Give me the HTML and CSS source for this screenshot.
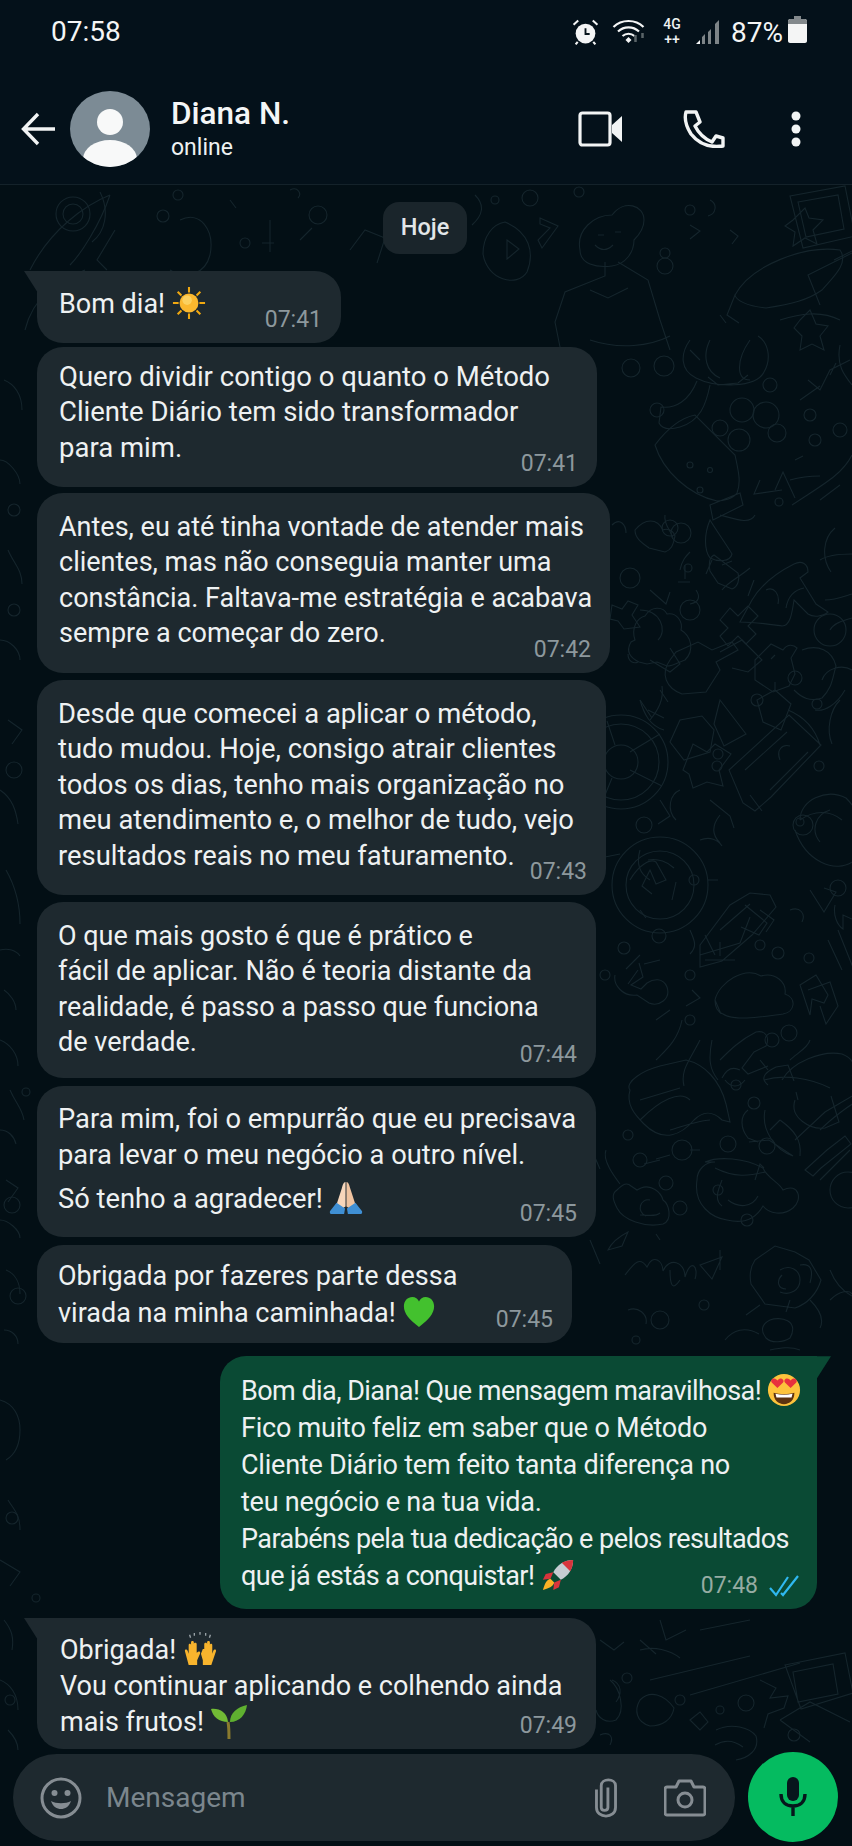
FILE: index.html
```html
<!DOCTYPE html>
<html lang="pt">
<head>
<meta charset="utf-8">
<title>Diana N.</title>
<link rel="stylesheet" href="styles.css">
</head>
<body>
<div class="phone">
  <svg class="doodles" viewBox="0 0 852 1846" aria-hidden="true">
    <!-- top band -->
    <path d="M30 270c20-40 55-65 80-75M110 195c-10 30-30 60-40 70M25 330c10-40 40-50 60-60"/>
    <circle cx="73" cy="214" r="10"/><circle cx="73" cy="214" r="17"/>
    <path d="M100 192c10 20 5 40-8 50M115 230l-18 30 10 10M180 220c20-10 35 10 30 35-5 20-25 25-40 15"/>
    <circle cx="163" cy="216" r="6"/><circle cx="178" cy="195" r="5"/><circle cx="318" cy="215" r="9"/><circle cx="245" cy="243" r="5"/>
    <path d="M262 243h12M300 240l12-12M350 250l15-20 20 8-8 25M290 190c8-4 12 4 8 8M230 200l6 8M270 220v32"/>
    <circle cx="530" cy="198" r="8"/><circle cx="495" cy="200" r="4"/><circle cx="579" cy="192" r="5"/>
    <path d="M475 195c10 10 8 20-3 30M505 222c24 10 30 30 22 50-10 16-40 8-44-18 0-18 10-30 22-32ZM507 240l12 9-12 10ZM540 218l18 8-16 22 -4-8 12-12-10-4Z"/>
    <path d="M580 250c-4-20 14-35 32-35 12-16 32-10 32 5 0 8-6 16-10 20 0 12-8 24-22 26-16 2-32-2-32-16ZM595 245c6 6 12 6 18 0M598 235h6M615 232h6M605 262v14l-40 16-10 30 6 30M618 262l30 18 12 40 10 30M590 290l18 8 20-10M590 340c30 10 60 6 80-4"/>
    <circle cx="690" cy="210" r="5"/><circle cx="665" cy="253" r="5"/><circle cx="665" cy="266" r="8"/>
    <path d="M690 225l10 6-10 8M710 200c8 4 6 14-2 16M730 230l8 6-6 8M735 295c16-30 70-50 105-45 10 14-10 30-18 40-14 10-30 14-56 18-20-2-30-8-31-13ZM735 295l-8 20 12 8M780 320c20-6 40-10 60 0"/>
    <path d="M793 220l12-12 4 10 14 2-10 10 4 14-12-6-12 8 2-14-10-6Z"/>
    <path d="M790 196l55-10 10 50-52 12Z M798 202l40-7 6 34-38 8ZM834 260l40-20M820 305l-12-30 50-25"/>
    <path d="M800 320l10-10 6 14 12 2-8 10 4 14-12-6-12 6 2-14-8-8ZM720 315l6 8M690 350l10 10"/>
    <!-- right column upper -->
    <path d="M690 340c-10 14-10 30 6 38 20 10 60 10 68 -6 8-14 4-30-6-36M750 340c-14 20-14 40 0 40M710 340c-8 16-4 32 10 38M708 377l10 8 20-2 10-8M710 385c-4 20-10 36-30 42-10 3-18 2-21-4l2-16c14 2 28-6 36-26"/>
    <circle cx="631" cy="368" r="9"/><circle cx="664" cy="366" r="10"/><circle cx="657" cy="410" r="7"/><circle cx="770" cy="385" r="7"/>
    <circle cx="742" cy="410" r="12"/><circle cx="766" cy="415" r="13"/><circle cx="720" cy="428" r="8"/><circle cx="777" cy="433" r="9"/><circle cx="739" cy="440" r="11"/>
    <path d="M655 445c15-20 30-28 40-30l40 40c4 18 6 28 2 38-4 6-14 8-20 8-28-6-54-30-62-56ZM710 505l30-12 3 12-30 15ZM720 515c15 4 30 10 35 0"/>
    <circle cx="690" cy="465" r="3"/><circle cx="710" cy="470" r="2.5"/><circle cx="700" cy="490" r="3"/>
    <path d="M760 480l-6 14 28-4M775 490l8-18 12 26M790 480c14-4 22-4 30-4M792 505c30-20 50-30 60-50M820 500l20-15M795 460l8-4"/>
    <path d="M808 380l12 10 10-20 20-10M800 400l20-14M830 375l6-12M840 345c-4 20 4 30 12 40"/>
    <circle cx="810" cy="415" r="6"/><circle cx="840" cy="430" r="7"/><circle cx="815" cy="440" r="6"/>
    <!-- right column mid -->
    <circle cx="670" cy="528" r="8"/><circle cx="681" cy="533" r="10"/>
    <circle cx="779" cy="502" r="4"/>
    <path d="M635 530c10-12 22-12 28 0 4-2 10 0 12 6-2 10-4 14-10 16l-16-4c-8-6-14-10-14-18Z M612 525c8-8 14 0 14 8M600 560c-10 0-14-10-10-14"/>
    <path d="M710 520c-6 14-6 30 0 38 8 4 20 4 22-4-6-10-16-24-22-34ZM665 515c-2 10 8 18 8 24M722 565l10-4M712 560l-6 14"/>
    <circle cx="688" cy="568" r="4"/>
    <path d="M750 568c-12 10-22 14-28 22M754 580l-6 16M678 582h12M685 565v14M696 590c4 6 4 12-6 14"/>
    <path d="M714 555l24 18c2 6 0 14-6 16l-14-6-8-12c-2-8 0-14 4-16Z"/>
    <path d="M752 600c12-20 30-30 42-36 8-4 14 0 14 8l-8 6 16 26 12 8c-4 4-14 6-20 2l-14-14c-2 14-4 26-12 26-14-2-26-4-42-4ZM766 590c8-4 14 4 12 14M786 608c2-12 8-18 18-20"/>
    <path d="M592 510c14 4 14 18 6 26M640 610c20 0 28 20 18 30M628 654c0 8 6 10 10 8"/>
    <circle cx="630" cy="578" r="10"/>
    <path d="M835 528c-12 10-14 30-4 44M820 560c6-4 14-6 32-6M825 600c10 0 20-4 27-6M830 630c4-8 16-10 22-12"/>
    <circle cx="690" cy="610" r="10"/><circle cx="830" cy="630" r="16"/>
    <path d="M612 605l10 4 6-8 10 4-6 10 8 12-16 2-6-8-8-2ZM650 590l16 14 4-12M680 570c2-10 6-14 10-18"/>
    <path d="M720 620l10-12 8 8 10-10 10 10-10 10 8 8-10 10-8-8-10 10-8-10 8-8Z"/>
    <path d="M635 640c-4-12 2-22 10-24 6-10 18-10 22-2 10-2 16 8 14 16 10 6 14 20 4 30-6 2-12 6-18 6l-10-4-10 2-8-2c-8-4-14-10-8-20l4-2ZM650 660l20 12 10-8-10-16"/>
    <path d="M670 660c-10 14-4 28 12 34l24-2 14-22-4-8 22-12-6-8-20 8-14-8-22 10ZM720 652l22-12 20 20-14 12-16-4"/>
    <path d="M755 660l16-16 12 6c4-6 10-6 14-2l-6 10 4 16-6 12-16 6-18-12Z M775 655l-4 4"/>
    <circle cx="795" cy="678" r="7"/>
    <path d="M802 650c16-6 30 0 34 16-4 14-4 22-14 32-12 4-20 0-28-8M822 680c4-12 20-16 30-10M845 690c-8 14-20 22-30 20"/>
    <path d="M775 690l16 14-10 26-18-8-6-22ZM775 690v-8"/>
    <circle cx="757" cy="700" r="6"/><circle cx="817" cy="704" r="5"/>
    <path d="M720 700l26 34-22 12-10-22ZM660 690l8 12M640 700c4 14 10 26 24 30"/>
    <path d="M680 720l-10 22 14 18 26-8 4-22-12-14ZM648 710l16 8"/>
    <path d="M840 700c-10 10-14 30-8 44M780 760c-4-10 2-16 10-14"/>
    <circle cx="621" cy="762" r="17"/><circle cx="621" cy="762" r="47"/><circle cx="621" cy="762" r="38"/>
    <path d="M630 770l32 16M630 752l30-18M615 745l-8-24M612 778l-14 34"/>
    <path d="M650 720c8-10 14-20 12-34M640 700l12 18"/>
    <path d="M683 770l10-26 14 8 8-8 16 10-12 16 4 16-16-4-14 6-4-14Z"/>
    <circle cx="718" cy="754" r="5"/><circle cx="717" cy="766" r="5"/>
    <path d="M729 770l60-55 32 30-50 52-16 14-12-8ZM745 770l42-38M770 790l38-38M750 795l12 16M820 745c-6-20-20-30-32-35"/>
    <circle cx="819" cy="766" r="5"/>
    <path d="M800 820c0-20 26-32 46-22 10 10 16 20 10 34M795 830c10 30 40 46 60 30M830 810c-14 4-20 20-10 32M800 820c14-10 30-10 42 0"/>
    <circle cx="803" cy="825" r="10"/><circle cx="800" cy="822" r="4"/>
    <path d="M660 800l10 16-12 8M680 790c-10 4-14 20-4 30M710 800l20 16 4 12M720 815c-8 10-8 20 0 28M700 840c10-4 18 0 22 6"/>
    <circle cx="644" cy="825" r="8"/>
    <path d="M600 858l20-4M640 850c-4 14 0 24 10 30M648 860c10-2 20 2 26 8"/>
    <!-- right column lower -->
    <circle cx="660" cy="885" r="48"/><circle cx="660" cy="885" r="34"/>
    <path d="M630 880c8-14 20-22 26-18l10 18-10 4-6-14-8 16 10 8M672 900l4-18M640 910l6 8"/>
    <circle cx="694" cy="880" r="5"/>
    <path d="M708 880h10M690 930c4 10 8 16 0 24M705 935l10 20M720 942l0 14"/>
    <circle cx="659" cy="936" r="7"/><circle cx="624" cy="948" r="6"/>
    <path d="M700 945l30-40 20-12 20 2 6 12-24 28-30 26-22 6ZM720 930l30-26M700 955l40-12 10-26M745 905l22 18-8 12-18-8M705 960l30 0"/>
    <circle cx="760" cy="945" r="5"/><circle cx="778" cy="953" r="6"/><circle cx="809" cy="958" r="5"/>
    <path d="M760 910l14 10-8 12M790 910c10-4 16 4 12 12M810 890l14 22 12-20-12-4"/>
    <circle cx="838" cy="888" r="8"/>
    <path d="M835 905c-2 10 2 20 8 24v-14l9 4M838 930l16 40M828 940l14 30"/>
    <circle cx="605" cy="975" r="5"/>
    <path d="M640 955l-14 14M638 970l-10 14M660 960l-16 4"/>
    <circle cx="690" cy="975" r="5"/>
    <path d="M615 975c-2 10 8 22 22 20l12 8c10 4 22-4 18-16-4-10-14-8-20-4l-6 6-10-4 12-8-4-14M670 1010l-14 10M692 990l8 8-14 8"/>
    <path d="M715 1000c4-18 30-34 46-24 14-4 26 6 24 18 12 4 10 18-2 20-16 2-48 8-60 0-6-2-8-8-8-14ZM715 1000l6 14"/>
    <path d="M800 985l16-10 12 20-4 8-12-4-2 16ZM808 990l22-8 8 24-12 18-6-18"/>
    <circle cx="690" cy="1020" r="5"/><circle cx="772" cy="1040" r="7"/>
    <path d="M682 1020c-4 20-16 30-26 40M700 1040c-10 20-20 30-16 46M720 1060c10-10 20-20 36-28 10-2 14 6 10 14l-12 6-12 16 6 6 20-8M712 1040c-4 20-2 30 6 40M760 1060l8 10M810 1040c-2 8-14 14-20 20"/>
    <circle cx="789" cy="1033" r="8"/>
    <path d="M768 1085c-10-8 0-14 8-18l12-2 6 16M740 1070c-8-4-14 0-18 8M725 1080c6 8 14 8 20 0"/>
    <path d="M782 1080c10-18 40-30 60-26 10 4 16 12 10 22M764 1080c20-6 46-2 66 8"/>
    <path d="M798 1100l-2-8M795 1100c-6 18 16 30 30 28l14-6-8-26M780 1120c14 10 22 20 20 36"/>
    <path d="M630 1090c-6-8 14-20 30-24l26-6c18 4 34 20 40 44l4 18-8-2c-10-10-20-8-28 0-12 14-30 24-50 4-10-10-18-20-14-34ZM640 1100l40-12M640 1120c20-20 40-30 50-20M670 1130c14-4 30-10 40-10"/>
    <circle cx="736" cy="1085" r="5"/>
    <path d="M748 1110c-8 6-8 18 0 28l10 4M765 1110c-4 20 10 40 28 46l-24-16-20 2"/>
    <circle cx="754" cy="1103" r="6"/>
    <path d="M795 1140l30-28 34-20M820 1130c10-10 30-26 40-30M770 1130l10-10"/>
    <circle cx="628" cy="1135" r="5"/>
    <path d="M592 1135c-2 8 2 22 8 34M606 1150c-4 10 8 26 14 34"/>
    <circle cx="682" cy="1150" r="10"/><circle cx="728" cy="1144" r="8"/><circle cx="767" cy="1146" r="8"/>
    <circle cx="640" cy="1160" r="7"/><circle cx="666" cy="1183" r="7"/>
    <path d="M670 1155l-14 4M660 1160l-16 4M700 1150h-10"/>
    <path d="M705 1162c14-6 40-4 58 6 4 10 16 14 20 22 16-8 20 10 10 18-10 8-24 6-30-2-8 14-20 18-36 14-14-2-34-14-30-40 0-10 8-18 18-18ZM715 1168c20 10 34 8 50 4M728 1200c10 8 24 8 30-4M722 1180c-4 10-8 20 0 26"/>
    <circle cx="718" cy="1190" r="5"/>
    <path d="M755 1180l5-16 4 4M805 1170l22-20 18-14 6 8-30 24-8 8ZM820 1180l30-30"/>
    <circle cx="848" cy="1190" r="18"/>
    <path d="M617 1190c6-6 10-8 14-4l6 4 4-2c10-4 20 4 22 12 6 4 10 20 0 24-18 4-40-4-46-16-4-8-6-14 0-18ZM650 1200c-10-2-14 12-4 16M640 1215c8 0 16 2 20-2"/>
    <circle cx="680" cy="1208" r="7"/><circle cx="747" cy="1220" r="6"/>
    <path d="M608 1250c4-8 12-14 20-18l-6 14ZM590 1240l10 24M660 1240l-4-6M700 1265l22-8-10 22ZM720 1250l0 20"/>
    <path d="M625 1275c8-10 14-20 22-8 6-14 16-6 16 4 6-14 22-10 22 6 6-20 14-10 10 2M670 1270c0 14 2 22 10 10"/>
    <path d="M755 1260l20-14 20 6 14 8 12 20c-4 14-14 24-26 28l-30-4-14-20c-2-10 0-18 4-24ZM780 1270c10-6 20 0 20 10 0 10-10 16-20 12M782 1275c-6 6-4 14 4 14M800 1265c10-2 14 4 10 18M790 1300l-4 12M760 1305l-14 10"/>
    <path d="M830 1300c10-10 20-10 22-6M830 1270c4 10 10 20 22 26M810 1300c10 10 14 20 10 28"/>
    <circle cx="704" cy="1305" r="5"/><circle cx="660" cy="1320" r="9"/>
    <path d="M628 1310c10-4 20 4 18 14M770 1320c10-4 30 0 20 18-6 4-18 6-24 0-6-8-4-14 4-18Z"/>
    <circle cx="636" cy="1340" r="4"/>
    <path d="M725 1340c8-10 20-14 34-6M770 1350c10-2 20-4 30 0"/>
    <!-- left margin -->
    <path d="M6 870c8 14 14 30 14 54M0 950c8-2 16 0 20 6M4 990c6 4 12 12 12 20M0 1040c10 4 18 14 18 26M10 1090c6 14 12 18 14 30M0 1130c8 0 14 6 16 14M6 1180l12 8-10 14M0 1220c8 0 20 10 20 18M6 1270c10 4 14 14 14 24M4 1330c8 0 14 6 14 14"/>
    <circle cx="12" cy="1205" r="8"/><circle cx="26" cy="1092" r="4"/><circle cx="18" cy="1296" r="8"/>
    <path d="M4 380c10 4 18 14 18 30M0 460c8 0 20 14 20 24M8 550c6 14 14 20 14 34M0 640c10 0 20 10 20 20M8 720l14 10-10 14M0 790c12 8 16 20 18 34"/>
    <circle cx="14" cy="510" r="6"/><circle cx="14" cy="610" r="6"/><circle cx="14" cy="770" r="8"/>
    <path d="M0 1400c14 4 20 16 20 30 0 14-4 24-14 30M8 1500c6 10 12 14 12 30M0 1560l20 12-10 14M4 1620c8 10 10 18 8 30M0 1680c10 4 18 14 18 30M8 1730c6 6 10 12 10 20"/>
    <circle cx="36" cy="1598" r="4"/><circle cx="12" cy="1518" r="6"/><circle cx="10" cy="1700" r="5"/>
    <!-- bottom right -->
    <path d="M600 1640l14 10 10-8M640 1650c14-4 30 0 40 8M640 1640l16 14M660 1620l6 20 20-10M700 1630l50-10M650 1680l100-24M690 1695l110-32"/>
    <path d="M785 1665l60-12 8 40-52 16Z M793 1672l40-8 5 30-40 8ZM780 1720l30-18 40 20M780 1720l30 22"/>
    <path d="M610 1680c10 8 16 30 6 40-10 4-18-2-20-10M612 1680c10 4 10 14 4 22M600 1735c10-4 14 2 10 10"/>
    <path d="M640 1700c-6 10-4 22 10 26 12 0 22-6 24-18 -10-14-24-18-34-8ZM690 1720l10-8 8 10-8 8Z"/>
    <circle cx="627" cy="1678" r="5"/><circle cx="680" cy="1700" r="5"/><circle cx="746" cy="1703" r="8"/><circle cx="720" cy="1710" r="4"/>
    <path d="M760 1680l16 8-6 10 18-2-4 12-16 6-4 14M716 1730c16-8 34-2 40 6 4 14-8 22-20 24M715 1745c10-6 20-4 28 2"/>
    <circle cx="794" cy="1735" r="6"/>
  </svg>

  <div class="statusbar">
    <span class="clock">07:58</span>
    <div class="status-icons">
      <svg class="ic-alarm" viewBox="0 0 26 26"><circle cx="13" cy="14" r="9.500" fill="#f4f5f5"/><path d="M13 9v5.500h4" fill="none" stroke="#07141b" stroke-width="1.800"/><path d="M1.500 5.500 6 1.500M24.500 5.500 20 1.500M5.500 22l-2 2.500M20.500 22l2 2.500" stroke="#f4f5f5" stroke-width="2" fill="none"/></svg>
      <svg class="ic-wifi" viewBox="0 0 32 26"><path d="M1 8c8-8 22-8 30 0M5.500 12.500c6-5.500 15-5.500 21 0M10 17c3.500-3 8.500-3 12 0" fill="none" stroke="#f4f5f5" stroke-width="2.200"/><path d="M13 21l3-3 3 3-3 3z" fill="#f4f5f5"/><path d="M23 23v-7M30 19v-5" stroke="#5a6468" stroke-width="2.500"/></svg>
      <span class="net"><span class="net-g">4G</span><span class="net-plus">++</span></span>
      <svg class="ic-signal" viewBox="0 0 26 26"><path d="M1 25l4-4v4z" fill="#f4f5f5"/><path d="M7 25v-7l3-3v10zM13 25V13l3-3v15zM20 25V5l4-4v24z" fill="#7d8487"/></svg>
      <span class="battery-pct">87%</span>
      <svg class="ic-battery" viewBox="0 0 19 27"><path d="M6 0h7v3h4c1 0 2 1 2 2v20c0 1-1 2-2 2H2c-1 0-2-1-2-2V5c0-1 1-2 2-2h4z" fill="#f4f5f5"/><path d="M6 0h7v3h4c1 0 2 1 2 2v3H0V5c0-1 1-2 2-2h4z" fill="#83898c"/></svg>
    </div>
  </div>

  <header class="appbar">
    <svg class="ic-back" viewBox="0 0 36 36"><path d="M34 18H3M17 3 2.500 18 17 33" fill="none" stroke="#f2f4f4" stroke-width="3.400"/></svg>
    <svg class="avatar" viewBox="0 0 80 76"><defs><clipPath id="avatar-clip"><ellipse cx="40" cy="38" rx="40" ry="38"/></clipPath></defs><g clip-path="url(#avatar-clip)"><rect width="80" height="76" fill="#7c8b95"/><circle cx="40" cy="31" r="13" fill="#f8f9f9"/><ellipse cx="40" cy="68" rx="27" ry="19" fill="#f8f9f9"/></g></svg>
    <div class="contact">
      <span class="contact-name">Diana N.</span>
      <span class="contact-state">online</span>
    </div>
    <div class="actions">
      <svg class="ic-video" viewBox="0 0 45 36"><rect x="2" y="2" width="30" height="32" rx="2.500" fill="none" stroke="#f2f4f4" stroke-width="3.200"/><path d="M34 14 44 5v26l-10-9z" fill="#f2f4f4"/></svg>
      <svg class="ic-phone" viewBox="0 0 42 38"><path d="M3 2h10l4 10-5 4c4 8 10 13 17 16l4-6 7 2 0 8c-14 2-25-3-32-12C3 16 1 9 3 2Z" fill="none" stroke="#f2f4f4" stroke-width="3.400" stroke-linejoin="round"/></svg>
      <svg class="ic-more" viewBox="0 0 10 36"><circle cx="5" cy="5" r="4.500" fill="#f2f4f4"/><circle cx="5" cy="18" r="4.500" fill="#f2f4f4"/><circle cx="5" cy="31" r="4.500" fill="#f2f4f4"/></svg>
    </div>
  </header>

  <main class="chat">
    <div class="day">Hoje</div>

    <div class="bubble in tail b1">Bom dia! <svg class="emoji" viewBox="0 0 36 36"><g stroke="#f0a810" stroke-width="2.200"><path d="M18 1v6M18 29v6M1 18h6M29 18h6M6 6l4 4M26 26l4 4M6 30l4-4M26 10l4-4"/></g><circle cx="18" cy="18" r="10" fill="#fbb82e"/><circle cx="16" cy="15" r="5" fill="#fcd15f"/></svg><span class="time">07:41</span></div>

    <div class="bubble in b2">Quero dividir contigo o quanto o Método<br>Cliente Diário tem sido transformador<br>para mim.<span class="time">07:41</span></div>

    <div class="bubble in b3">Antes, eu até tinha vontade de atender mais<br>clientes, mas não conseguia manter uma<br>constância. Faltava-me estratégia e acabava<br>sempre a começar do zero.<span class="time">07:42</span></div>

    <div class="bubble in b4">Desde que comecei a aplicar o método,<br>tudo mudou. Hoje, consigo atrair clientes<br>todos os dias, tenho mais organização no<br>meu atendimento e, o melhor de tudo, vejo<br>resultados reais no meu faturamento.<span class="time">07:43</span></div>

    <div class="bubble in b5">O que mais gosto é que é prático e<br>fácil de aplicar. Não é teoria distante da<br>realidade, é passo a passo que funciona<br>de verdade.<span class="time">07:44</span></div>

    <div class="bubble in b6">Para mim, foi o empurrão que eu precisava<br>para levar o meu negócio a outro nível.<br><span class="lower-line">Só tenho a agradecer! <svg class="emoji" viewBox="0 0 36 36"><path d="M17.500 1c-2 0-3 3-4 7L8 25l5 5 4.500-3z" fill="#f7d6bb"/><path d="M18.500 1c2 0 3 3 4 7L28 25l-5 5-4.500-3z" fill="#efc3a0"/><path d="M8 23 1 32c-.5 2 .5 3 2 3h13l1-6zM28 23l7 9c.5 2-.5 3-2 3H20l-1-6z" fill="#3f8fd4"/></svg></span><span class="time">07:45</span></div>

    <div class="bubble in b7">Obrigada por fazeres parte dessa<br>virada na minha caminhada! <svg class="emoji" viewBox="0 0 36 36"><path d="M18 34C8 26 2 20 2 12 2 6 6 2 11 2c3 0 6 2 7 5 1-3 4-5 7-5 5 0 9 4 9 10 0 8-6 14-16 22Z" fill="#43c12e"/></svg><span class="time">07:45</span></div>

    <div class="bubble out tail b8">Bom dia, Diana! Que mensagem maravilhosa! <svg class="emoji" viewBox="0 0 36 36"><circle cx="18" cy="18" r="17" fill="#fdc33c"/><path d="M7 21c6 2 16 2 22 0 0 8-5 12-11 12S7 29 7 21Z" fill="#5d3210"/><path d="M9 22c6 1.500 12 1.500 18 0l-1 4H10z" fill="#fff"/><path d="M11 16l-6-6c-2-3 2-6 5-3l1 1 1-1c3-3 7 1 5 3zM25 16l-6-6c-2-3 2-6 5-3l1 1 1-1c3-3 7 1 5 3z" fill="#e8323e"/></svg><br><span class="wide">Fico muito feliz em saber que o Método</span><br><span class="wide">Cliente Diário tem feito tanta diferença no</span><br><span class="wide">teu negócio e na tua vida.</span><br>Parabéns pela tua dedicação e pelos resultados<br>que já estás a conquistar! <svg class="emoji" viewBox="0 0 36 36"><path d="M34 2c-9 0-17 5-21 13l8 8C29 19 34 11 34 2Z" fill="#c5ccd2"/><path d="M34 2c-4 0-8 1-12 3l9 9c2-4 3-8 3-12Z" fill="#d8343c"/><path d="M13 15 5 17l-3 6 8-1zM21 23l-2 8-6 3 1-8z" fill="#d8343c"/><path d="M10 22c-4 1-6 5-8 12 7-2 11-4 12-8z" fill="#fbb225"/></svg><span class="time">07:48<svg class="ticks" viewBox="0 0 30 22"><path d="M1 13l6 7L19 2M12 18l2 2L29 1" fill="none" stroke="#2fb8f0" stroke-width="2.200"/></svg></span></div>

    <div class="bubble in tail b9">Obrigada! <svg class="emoji" viewBox="0 0 36 36"><path d="M12 1v3M18 0v3M24 1v3M7 3l1 3M29 3l-1 3" stroke="#9aa3a8" stroke-width="1.400" fill="none"/><path d="M6 35 2 20c0-2 2-2 3 0l1 3 0-9c0-2 2.500-2 2.500 0v-3c0-2 3-2 3 0v2c0-2 3-2 3 0l0 9 1.500-1c2-1 2.500 0 2 2l-3 7 0 5z" fill="#f8b42d"/><path d="M30 35l-9 0 0-5 -2-7 2-5 .5 0 1 0 0-5c0-2 3-2 3 0v-2c0-2 3-2 3 0v3c0-2 2.500-2 2.500 0l0 9 1-3c1-2 3-2 3 0z" fill="#f8b42d"/></svg><br>Vou continuar aplicando e colhendo ainda<br>mais frutos! <svg class="emoji seedling" viewBox="0 0 36 36"><path d="M18 35c0-8 0-12-1-17" fill="none" stroke="#8a7a2e" stroke-width="3"/><path d="M17 18C8 18 2 13 0 5c8-1 16 3 17 13Z" fill="#72bb35"/><path d="M19 18c0-9 7-15 17-17-1 9-7 17-17 17Z" fill="#5fb030"/></svg><span class="time">07:49</span></div>
  </main>

  <footer class="composer">
    <div class="field">
      <svg class="ic-smile" viewBox="0 0 42 42"><circle cx="21" cy="21" r="19" fill="none" stroke="#868d93" stroke-width="3"/><circle cx="14.500" cy="16" r="3" fill="#868d93"/><circle cx="27.500" cy="16" r="3" fill="#868d93"/><path d="M11 24c5 3 15 3 20 0-2 6-6 8-10 8s-8-2-10-8z" fill="#868d93"/></svg>
      <span class="placeholder">Mensagem</span>
      <svg class="ic-clip" viewBox="0 0 26 42"><path d="M8 8v23c0 4 7 4 7 0V10M3 12v19c0 12 20 12 20 0V8C23 0 8 0 8 8" fill="none" stroke="#868d93" stroke-width="3"/></svg>
      <svg class="ic-camera" viewBox="0 0 42 38"><path d="M3 8h9l3-6h12l3 6h9c1 0 2 1 2 2v24c0 1-1 2-2 2H3c-1 0-2-1-2-2V10c0-1 1-2 2-2Z" fill="none" stroke="#868d93" stroke-width="3" stroke-linejoin="round"/><circle cx="21" cy="21" r="7" fill="none" stroke="#868d93" stroke-width="3"/></svg>
    </div>
    <div class="mic">
      <svg class="ic-mic" viewBox="0 0 28 40"><rect x="8" y="0" width="12" height="24" rx="6" fill="#07161c"/><path d="M2 17c0 8 5 12 12 12s12-4 12-12M14 29v10" fill="none" stroke="#07161c" stroke-width="3.400"/></svg>
    </div>
  </footer>
</div>
</body>
</html>
```

FILE: styles.css
```css
* { box-sizing: border-box; }
html, body { margin: 0; padding: 0; background: #030f15; }
body { font-family: Roboto, "Noto Sans", sans-serif; color: #eef1f2; }

.phone {
  position: relative;
  width: 852px;
  height: 1846px;
  overflow: hidden;
  display: flex;
  flex-direction: column;
  background: #030f15;
}

.doodles {
  position: absolute;
  inset: 0;
  width: 852px;
  height: 1846px;
}
.doodles path, .doodles circle {
  fill: none;
  stroke: #15252c;
  stroke-width: 1.1;
}

.statusbar {
  position: relative;
  flex: none;
  height: 60px;
  padding: 12px 45px 0 51px;
  display: flex;
  justify-content: space-between;
  background: #04111a;
}
.clock { font-size: 28px; line-height: 40px; color: #f4f5f5; }
.status-icons { display: flex; align-items: center; height: 40px; }
.ic-alarm { width: 27px; height: 27px; margin-right: 13px; }
.ic-wifi { width: 33px; height: 26px; margin-right: 15px; }
.net { display: flex; flex-direction: column; width: 24px; text-align: center; margin-right: 11px; font-weight: 500; }
.net-g { font-size: 14px; line-height: 15px; }
.net-plus { font-size: 14px; line-height: 15px; }
.ic-signal { width: 26px; height: 26px; margin-right: 10px; }
.battery-pct { font-size: 28px; margin-right: 5px; color: #f4f5f5; }
.ic-battery { width: 19px; height: 27px; margin-top: -5px; }

.appbar {
  position: relative;
  flex: none;
  height: 125px;
  display: flex;
  align-items: center;
  padding: 14px 0 1px 21px;
  background: #04111a;
  border-bottom: 1px solid #14222a;
}
.ic-back { width: 36px; height: 36px; }
.avatar { width: 80px; height: 76px; margin-left: 13px; }
.contact { display: flex; flex-direction: column; margin-left: 21px; }
.contact-name { font-size: 31.500px; line-height: 38px; font-weight: 500; color: #f4f6f6; }
.contact-state { font-size: 23px; line-height: 30px; color: #eef1f2; }
.actions { margin-left: auto; display: flex; align-items: center; padding-right: 51px; }
.ic-video { width: 45px; height: 36px; }
.ic-phone { width: 42px; height: 38px; margin-left: 60px; }
.ic-more { width: 10px; height: 36px; margin-left: 66px; }

.chat {
  position: relative;
  flex: 1;
  display: flex;
  flex-direction: column;
  align-items: flex-start;
  padding: 17px 0 0 37px;
  min-height: 0;
}
.day {
  align-self: center;
  margin-left: -39px;
  width: 84px;
  height: 52px;
  border-radius: 16px;
  background: #1a252b;
  font-size: 23.500px;
  font-weight: 500;
  line-height: 50px;
  text-align: center;
  color: #e2e6e8;
}

.bubble {
  position: relative;
  background: #1e292f;
  border-radius: 26px;
  padding-left: 22px;
  font-size: 27px;
  line-height: 35.500px;
  color: #eef1f2;
  white-space: nowrap;
}
.bubble.out {
  background: #0a4a34;
  padding-left: 21px;
  font-size: 27px;
  letter-spacing: -0.55px;
  line-height: 37px;
}
.wide { letter-spacing: -0.22px; }
.in.tail { border-top-left-radius: 0; }
.out.tail { border-top-right-radius: 0; }
.tail::before {
  content: "";
  position: absolute;
  top: 0;
  width: 14px;
  height: 22px;
  background: inherit;
}
.in.tail::before { left: -13px; clip-path: polygon(0 0, 100% 0, 100% 100%); }
.out.tail::before { right: -14px; clip-path: polygon(0 0, 100% 0, 0 100%); }

.time {
  position: absolute;
  right: 19px;
  bottom: 10px;
  display: flex;
  align-items: center;
  font-size: 23px;
  letter-spacing: 0;
  line-height: 26px;
  color: #8d989d;
}
.out .time { right: 18px; color: #96aca3; }
.ticks { width: 30px; height: 22px; margin-left: 11px; }

.emoji { display: inline-block; width: 34px; height: 34px; vertical-align: -7px; }
.emoji.seedling { width: 36px; height: 36px; vertical-align: -9px; }
.lower-line { display: inline-block; margin-top: 8px; }

.b1 { width: 304px; height: 72px; margin-top: 17px; padding-top: 15px; }
.b2 { width: 560px; height: 140px; margin-top: 4px; padding-top: 12px; font-size: 27.500px; }
.b3 { width: 573px; height: 180px; margin-top: 6px; padding-top: 17px; }
.b4 { width: 569px; height: 215px; margin-top: 7px; padding-top: 17px; font-size: 27.400px; padding-left: 21px; }
.b5 { width: 559px; height: 177px; margin-top: 7px; padding-top: 17px; padding-left: 21px; }
.b6 { width: 559px; height: 151px; margin-top: 8px; padding-top: 16px; font-size: 27.300px; padding-left: 21px; }
.b7 { width: 535px; height: 98px; margin-top: 8px; padding-top: 14px; padding-left: 21px; }
.b8 { width: 597px; height: 253px; margin: 13px 0 0 183px; padding-top: 17px; }
.b9 { width: 559px; height: 131px; margin-top: 9px; padding-top: 14px; padding-left: 23px; }

.composer {
  position: relative;
  flex: none;
  height: 97px;
  display: flex;
  align-items: center;
  padding: 0 14px 2px 13px;
}
.field {
  flex: 1;
  height: 87px;
  margin-top: 2px;
  border-radius: 44px;
  background: #1e292f;
  display: flex;
  align-items: center;
  padding-left: 27px;
}
.ic-smile { width: 42px; height: 42px; }
.placeholder { margin-left: 24px; font-size: 28px; color: #7b868d; }
.ic-clip { width: 26px; height: 40px; margin-left: auto; }
.ic-camera { width: 42px; height: 38px; margin-left: 45px; margin-right: 29px; }
.mic {
  flex: none;
  width: 90px;
  height: 90px;
  margin-left: 13px;
  border-radius: 50%;
  background: #05bb60;
  display: flex;
  align-items: center;
  justify-content: center;
}
.ic-mic { width: 28px; height: 40px; }
```
